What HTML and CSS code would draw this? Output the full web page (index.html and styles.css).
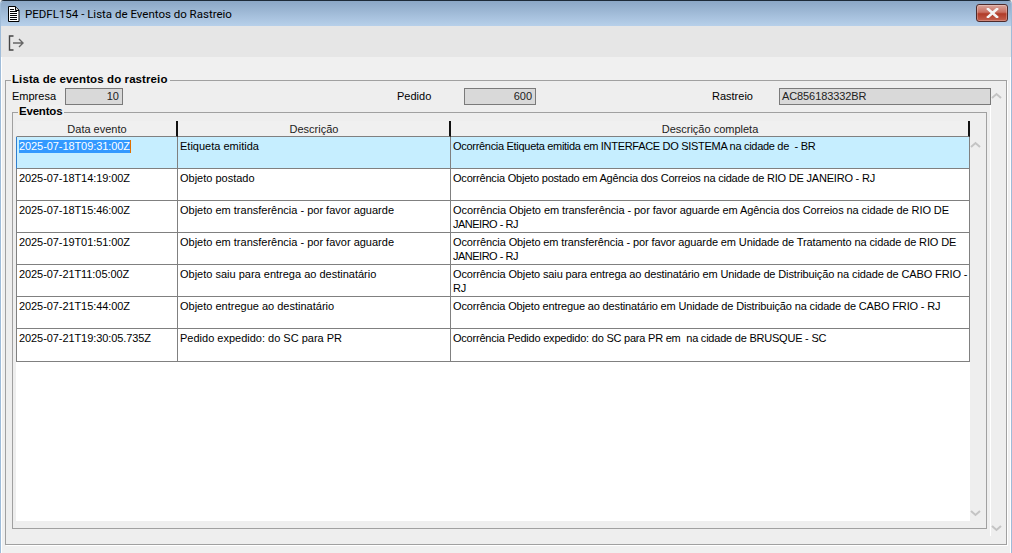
FILE: index.html
```html
<!DOCTYPE html>
<html lang="pt-BR">
<head>
<meta charset="utf-8">
<title>PEDFL154 - Lista de Eventos do Rastreio</title>
<link rel="stylesheet" href="styles.css">
</head>
<body>
<div class="window">
  <header class="titlebar">
    <svg class="doc-icon" width="13" height="16" viewBox="0 0 13 16">
      <path d="M1.500.5h7l3.500 3.500v11.500h-10.500z" fill="#fff" stroke="#000"/>
      <path d="M8.500.5v4h3.500" fill="#ccc" stroke="#000"/>
      <path d="M3 3.500h4M3 5.500h7M3 7.500h7M3 9.500h7M3 11.500h7M3 13.500h7" stroke="#000" stroke-width="1"/>
    </svg>
    <span class="title">PEDFL154 - Lista de Eventos do Rastreio</span>
    <button class="close" aria-label="Fechar">
      <svg width="13" height="10" viewBox="0 0 13 10"><path d="M2 1l9 8M11 1l-9 8" stroke="#f4f4f4" stroke-width="2.600" stroke-linecap="square" fill="none"/></svg>
    </button>
  </header>
  <div class="toolbar">
    <svg class="exit-icon" width="17" height="16" viewBox="0 0 17 16">
      <path d="M5.500 1H1.500V15H5.500" fill="none" stroke="#444" stroke-width="1.400"/>
      <path d="M5 8H15M11 4l4 4-4 4" fill="none" stroke="#666" stroke-width="1.400"/>
    </svg>
  </div>
  <main class="content">
    <section class="group outer">
      <h2 class="legend">Lista de eventos do rastreio</h2>
      <div class="fields">
        <label>Empresa</label><output class="input num">10</output><span></span>
        <label>Pedido</label><output class="input num">600</output><span></span>
        <label>Rastreio</label><output class="input code">AC856183332BR</output>
      </div>
      <section class="group inner">
        <h3 class="legend">Eventos</h3>
        <div class="grid">
          <table>
            <colgroup><col class="c1"><col class="c2"><col class="c3"></colgroup>
            <thead>
              <tr><th>Data evento</th><th>Descrição</th><th>Descrição completa</th></tr>
            </thead>
            <tbody>
              <tr class="selected">
                <td class="focus"><span class="sel">2025-07-18T09:31:00Z</span></td>
                <td>Etiqueta emitida</td>
                <td>Ocorrência Etiqueta emitida em INTERFACE DO SISTEMA na cidade de&nbsp; - BR</td>
              </tr>
              <tr>
                <td>2025-07-18T14:19:00Z</td>
                <td>Objeto postado</td>
                <td>Ocorrência Objeto postado em Agência dos Correios na cidade de RIO DE JANEIRO - RJ</td>
              </tr>
              <tr>
                <td>2025-07-18T15:46:00Z</td>
                <td>Objeto em transferência - por favor aguarde</td>
                <td>Ocorrência Objeto em transferência - por favor aguarde em Agência dos Correios na cidade de RIO DE<br><span class="caps">JANEIRO - RJ</span></td>
              </tr>
              <tr>
                <td>2025-07-19T01:51:00Z</td>
                <td>Objeto em transferência - por favor aguarde</td>
                <td>Ocorrência Objeto em transferência - por favor aguarde em Unidade de Tratamento na cidade de RIO DE<br><span class="caps">JANEIRO - RJ</span></td>
              </tr>
              <tr>
                <td>2025-07-21T11:05:00Z</td>
                <td>Objeto saiu para entrega ao destinatário</td>
                <td>Ocorrência Objeto saiu para entrega ao destinatário em Unidade de Distribuição na cidade de CABO FRIO -<br>RJ</td>
              </tr>
              <tr>
                <td>2025-07-21T15:44:00Z</td>
                <td>Objeto entregue ao destinatário</td>
                <td>Ocorrência Objeto entregue ao destinatário em Unidade de Distribuição na cidade de CABO FRIO - RJ</td>
              </tr>
              <tr>
                <td>2025-07-21T19:30:05.735Z</td>
                <td>Pedido expedido: do SC para PR</td>
                <td>Ocorrência Pedido expedido: do SC para PR em&nbsp; na cidade de BRUSQUE - SC</td>
              </tr>
            </tbody>
          </table>
        </div>
        <svg class="arrow inner-up" width="11" height="7" viewBox="0 0 11 7"><path d="M1 6l4.500-4 4.500 4" fill="none" stroke="#c4c4c4" stroke-width="2"/></svg>
        <svg class="arrow inner-down" width="11" height="7" viewBox="0 0 11 7"><path d="M1 1l4.500 4 4.500-4" fill="none" stroke="#c4c4c4" stroke-width="2"/></svg>
      </section>
      <i class="track"></i>
      <svg class="arrow outer-up" width="11" height="7" viewBox="0 0 11 7"><path d="M1 6l4.500-4 4.500 4" fill="none" stroke="#c4c4c4" stroke-width="2"/></svg>
      <svg class="arrow outer-down" width="11" height="7" viewBox="0 0 11 7"><path d="M1 1l4.500 4 4.500-4" fill="none" stroke="#c4c4c4" stroke-width="2"/></svg>
    </section>
  </main>
</div>
</body>
</html>
```
FILE: styles.css
```css
* { box-sizing: border-box; }
html, body { margin: 0; padding: 0; }
body {
  width: 1012px;
  height: 553px;
  overflow: hidden;
  background: #f0f0f0;
  font-family: "Liberation Sans", Arial, sans-serif;
  font-size: 11px;
  color: #000;
}
.window {
  display: flex;
  flex-direction: column;
  height: 553px;
  border-top: 1px solid #1d2a38;
  border-left: 1px solid #9fbcd9;
  border-right: 1px solid #9fbcd9;
  border-top-left-radius: 4px;
  border-top-right-radius: 4px;
  overflow: hidden;
  position: relative;
}
.titlebar {
  height: 25px;
  flex: none;
  display: flex;
  align-items: center;
  padding: 0 3px 0 6px;
  background: linear-gradient(#8ba7c6, #b7d0ea);
}
.doc-icon { flex: none; margin-top: 1px; }
.title {
  margin-left: 5px;
  font-family: Roboto, sans-serif;
  font-size: 11.500px;
  color: #000;
  flex: 1;
}
.close {
  width: 32px;
  height: 18px;
  padding: 0;
  margin: -1px 0 0;
  border: 1px solid #4e2a2a;
  border-radius: 3px;
  background: linear-gradient(#d9a59b 0, #c96f60 45%, #b03b28 55%, #c4614e 100%);
  display: flex;
  align-items: center;
  justify-content: center;
  box-shadow: inset 0 0 0 1px rgba(255,255,255,.25);
}
.toolbar {
  height: 31px;
  flex: none;
  background: #e6e6e6;
  padding: 9px 0 0 7px;
}
.exit-icon { display: block; }
.content {
  flex: 1;
  padding: 23px 0 0 3px;
  background: #f0f0f0;
  border-left: 1px solid #fff;
  border-right: 1px solid #fff;
}
.group {
  position: relative;
  border: 1px solid #a0a0a0;
}
.outer {
  width: 1002px;
  height: 465px;
  padding: 7px 0 0 6px;
  background: #eeeeee;
  box-shadow: 1px 1px 0 #fff;
}
.inner {
  width: 975px;
  height: 417px;
  margin-top: 7px;
  padding: 8px 0 0 3px;
  background: #eeeeee;
}
.legend {
  position: absolute;
  top: -8px;
  margin: 0;
  padding: 0 2px 0 1px;
  background: #f0f0f0;
  font-size: 11.500px;
  line-height: 13px;
  font-weight: bold;
  letter-spacing: .1px;
}
.outer > .legend { left: 5px; }
.inner > .legend { left: 5px; letter-spacing: -.2px; }
.fields {
  display: grid;
  grid-template-columns: 53px 58px 274px 67px 72px 176px 67px 212px;
  align-items: center;
  height: 17px;
}
.fields label { padding-bottom: 2px; }
.input {
  display: block;
  height: 17px;
  line-height: 15px;
  padding: 0 3px 0 2px;
  border: 1px solid #7a7a7a;
  background: #d9d9d9;
  color: #222;
  position: relative;
  z-index: 1;
}
.num { text-align: right; }
.code { letter-spacing: -.1px; }
.grid {
  width: 954px;
  height: 400px;
  background: #fff;
}
table {
  border-collapse: separate;
  border-spacing: 0;
  table-layout: fixed;
  width: 954px;
}
.c1 { width: 162px; }
.c2 { width: 273px; }
.c3 { width: 519px; }
th {
  height: 16px;
  padding: 0 0 0 1px;
  font-weight: normal;
  text-align: center;
  line-height: 14px;
  background: #f0f0f0;
  border-right: 2px solid #111;
  border-bottom: 1px solid #808080;
  color: #222;
}
td {
  height: 32px;
  padding: 2px 2px 0 2px;
  vertical-align: top;
  line-height: 14px;
  white-space: nowrap;
  border-right: 1px solid #808080;
  border-bottom: 1px solid #808080;
  background: #fff;
}
td:first-child { border-left: 1px solid #808080; letter-spacing: -.08px; }
th:first-child { border-left: 1px solid #f0f0f0; }
tr:last-child td { height: 33px; }
tr:nth-child(1) td:nth-child(3) { letter-spacing: -.3px; }
tr:nth-child(2) td:nth-child(3) { letter-spacing: -.2px; }
tr:nth-child(3) td:nth-child(3) { letter-spacing: -.08px; }
tr:nth-child(4) td:nth-child(3) { letter-spacing: -.11px; }
tr:nth-child(5) td:nth-child(3) { letter-spacing: -.13px; }
tr:nth-child(6) td:nth-child(3) { letter-spacing: -.15px; }
tr:nth-child(7) td:nth-child(3) { letter-spacing: -.22px; }
.caps { letter-spacing: -.5px; }
.selected td { background: #c6eeff; }
.selected td.focus { border-left-color: #2f7fd0; }
.sel {
  background: #3399ff;
  color: #fff;
  border-right: 1px solid #e07000;
  display: inline-block;
  line-height: 13px;
}
.arrow { position: absolute; display: block; }
.inner-up { left: 957px; top: 28px; }
.inner-down { left: 957px; top: 397px; }
.outer-up { left: 985px; top: 11px; }
.outer-down { left: 985px; top: 444px; }
.track {
  position: absolute;
  left: 984px;
  top: 7px;
  height: 448px;
  width: 1px;
  background: #fff;
}
```
